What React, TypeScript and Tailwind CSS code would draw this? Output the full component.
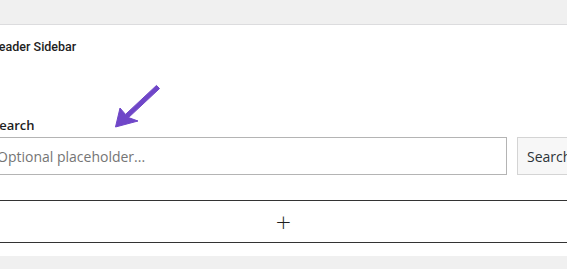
import React from 'react';

const Arrow = () => (
  <svg className="absolute left-[110px] top-[57px]" width="56" height="52" viewBox="0 0 56 52">
    <polygon
      points="5.5,45 10,26 15.5,32.4 46.5,3.4 49.5,6.6 18.5,35.6 28,39"
      fill="#6f46c8"
      strokeLinejoin="round"
      stroke="#6f46c8"
      strokeWidth="1"
    />
  </svg>
);

export default function App() {
  return (
    <div className="flex flex-col w-[567px] h-[269px] overflow-hidden bg-[#f0f0f0]">
      <div className="h-[25px] shrink-0 border-b border-[#dcdcde]" />
      <div className="relative h-[231px] shrink-0 bg-white overflow-hidden">
        <div className="-ml-[10px] pt-[14px] text-[12.5px] leading-[16px] font-medium text-[#1e1e1e] font-['Roboto',sans-serif]">
          Header Sidebar
        </div>
        <Arrow />
        <div className="-ml-[8px] mt-[61px] text-[13px] leading-[18px] font-semibold text-[#1e1e1e] font-['Open_Sans',sans-serif]">
          Search
        </div>
        <div className="flex items-center gap-[10px] -ml-[15px] mt-[3px] font-['Open_Sans',sans-serif]">
          <div className="shrink-0 w-[522px] h-[38px] border border-[#b4b4b4] flex items-center pl-[11px] text-[14px] text-[#757575]">
            Optional placeholder...
          </div>
          <div className="shrink-0 w-[80px] h-[38px] border border-[#d4d4d4] bg-[#f7f7f7] flex items-center pl-[9px] text-[14px] text-[#2c3338]">
            Search
          </div>
        </div>
        <div className="-mx-[20px] mt-[25px] h-[43px] border-y border-[#333] flex items-center justify-center">
          <span className="text-[20px] leading-none text-[#1e1e1e] font-['DejaVu_Sans',sans-serif] font-light">+</span>
        </div>
      </div>
    </div>
  );
}
